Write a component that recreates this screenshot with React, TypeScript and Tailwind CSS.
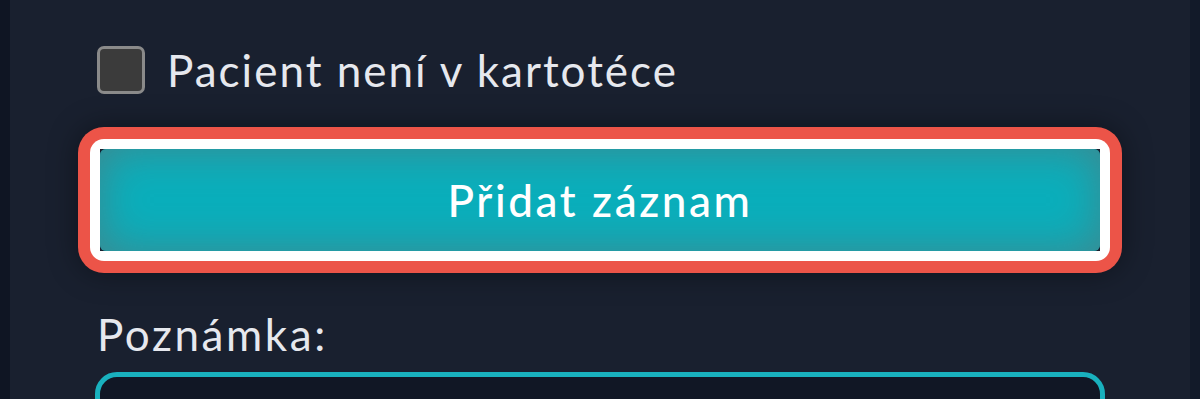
export default function App() {
  return (
    <div
      className="flex h-[399px] w-[1200px] overflow-hidden bg-[#0f1523]"
      style={{ fontFamily: "Lato, 'Noto Sans', sans-serif" }}
    >
      <div className="w-[10px] shrink-0" />

      {/* Form panel */}
      <div className="flex flex-1 flex-col bg-[#19202f] pl-[87px] pr-[87px]">
        {/* bottom edge of the field above */}
        <div className="ml-[320px] h-[5px] w-[200px] bg-[#1a3439] blur-[3px]" />

        <label className="mt-[46px] flex h-[48px] items-center gap-[22px]">
          <span className="h-[48px] w-[48px] rounded-[7px] border-[3px] border-[#8a8a8a] bg-[#3b3b3b]" />
          <span className="text-[44px] leading-none tracking-[2px] text-[#e6e8ee]">Pacient není v kartotéce</span>
        </label>

        <div className="mx-[-19px] mt-[33px] rounded-[26px] bg-[#ec5448] p-[12px] shadow-[0_0_30px_rgba(0,0,0,0.4)]">
          <div className="rounded-[14px] bg-white p-[10px]">
            <div className="bg-[#19202f]">
              <button className="flex h-[102px] w-full items-center justify-center rounded-[6px] bg-[#0aafbc] text-[44px] font-medium leading-none tracking-[2.6px] text-white shadow-[inset_0_0_45px_rgba(70,130,135,0.9)]">
                Přidat záznam
              </button>
            </div>
          </div>
        </div>

        <div className="mt-[39px] text-[44px] leading-none tracking-[2.6px] text-[#e6e8ee]">Poznámka:</div>

        <div className="mx-[-2px] mt-[16px] h-[120px] shrink-0 rounded-[22px] border-[5px] border-[#19b1be] bg-[#111725]" />
      </div>

      <div className="w-[10px] shrink-0 bg-[#121a29]" />
    </div>
  );
}
